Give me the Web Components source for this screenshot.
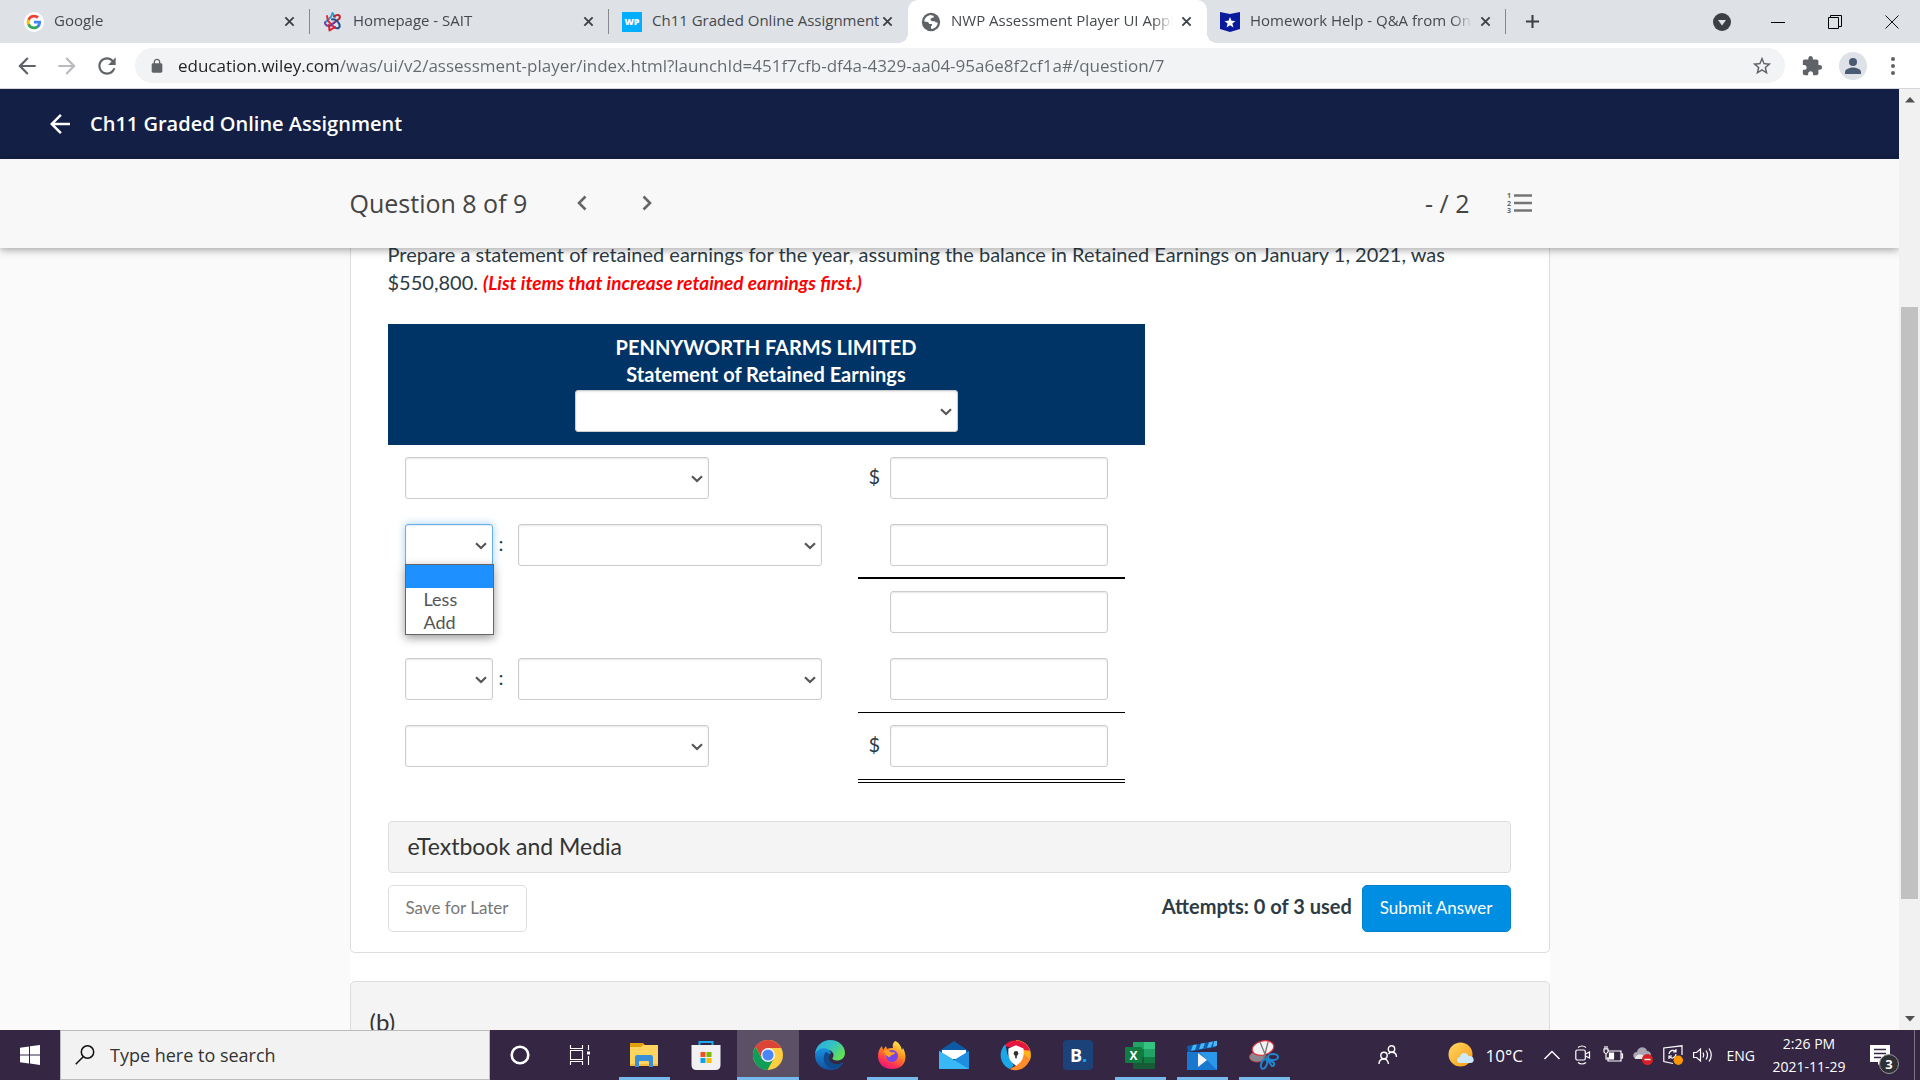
<!DOCTYPE html>
<html lang="en">
<head>
<meta charset="utf-8">
<title>NWP Assessment Player UI Application</title>
<style>
html, body { margin: 0; height: 100%; }
body { overflow: hidden; background: #fafafa; font-family: "Open Sans", "Noto Sans", sans-serif; }
</style>
</head>
<body>
<desktop-screen></desktop-screen>
<script>
const ICONS = {
  google: `<svg viewBox="0 0 24 24"><circle cx="12" cy="12" r="12" fill="#fff"/><g transform="translate(2.4 2.4) scale(.8)"><path fill="#4285f4" d="M22.56 12.25c0-.78-.07-1.53-.2-2.25H12v4.26h5.92c-.26 1.37-1.04 2.53-2.21 3.31v2.77h3.57c2.08-1.92 3.28-4.74 3.28-8.09z"/><path fill="#34a853" d="M12 23c2.97 0 5.46-.98 7.28-2.66l-3.57-2.77c-.98.66-2.23 1.06-3.71 1.06-2.86 0-5.29-1.93-6.16-4.53H2.18v2.84C3.99 20.53 7.7 23 12 23z"/><path fill="#fbbc05" d="M5.84 14.09c-.22-.66-.35-1.36-.35-2.09s.13-1.43.35-2.09V7.07H2.18C1.43 8.55 1 10.22 1 12s.43 3.45 1.18 4.93l2.85-2.22.81-.62z"/><path fill="#ea4335" d="M12 5.38c1.62 0 3.06.56 4.21 1.64l3.15-3.15C17.45 2.09 14.97 1 12 1 7.7 1 3.99 3.47 2.18 7.07l3.66 2.84c.87-2.6 3.3-4.53 6.16-4.53z"/></g></svg>`,
  sait: `<svg viewBox="0 0 20 20" fill="none" stroke-width="2" stroke-linecap="round" stroke-linejoin="round"><path d="M2 10.500l6-5.500 1.500-4L12 5" stroke="#2a9fd8"/><path d="M11 4.500c4-3 7-1 5.500 2L11 11" stroke="#c8202f"/><path d="M9 7.500c3-1 5 1 7 4 2 4-1 6-4 4" stroke="#1d4f91"/><path d="M4 4l1 5 7 7" stroke="#e02b3c"/><path d="M2 10.500c0 3 3 4 6 3l3-3" stroke="#6b3fa0"/><path d="M6 13l.5 5.500L12 15" stroke="#d6202f"/></svg>`,
  wp: `<svg viewBox="0 0 20 20"><path fill="#00aeff" d="M0 0h20v20H0z"/><text x="10" y="13.400" text-anchor="middle" font-family="Open Sans" font-weight="800" font-size="9" fill="#fff">WP</text></svg>`,
  globe: `<svg viewBox="0 0 24 24"><circle cx="12" cy="12" r="11" fill="#5f6368"/><path fill="#fff" d="M11 3.500c-4 1-7 4-7 8l4.500.5 1.500 2.500h2.500c1.500 0 1 2.500-.5 2.500v3c4 .5 8-3 8-7.500-2 .5-3-1-4-1.500-2 0-4 0-4.500-1.500-.4-2 1.500-2.500 3-2.500 1 0 1-1.500.5-2.500z"/></svg>`,
  homework: `<svg viewBox="0 0 20 20"><path fill="#0a1a9c" d="M0 0l10 2 10-2v17l-10 3-10-3z"/><path fill="#fff" d="M10 5l1.500 3.800 4 .2-3.100 2.600 1 3.900L10 13.300l-3.400 2.200 1-3.900L4.500 9l4-.2z"/></svg>`,
  cross: `<svg viewBox="0 0 12 12" fill="none" stroke="currentColor" stroke-width="2"><path d="M1.500 1.500l9 9M10.500 1.500l-9 9"/></svg>`,
  plus: `<svg viewBox="0 0 16 16" fill="none" stroke="currentColor" stroke-width="2.200"><path d="M8 1v14M1 8h14"/></svg>`,
  guest: `<svg viewBox="0 0 18 18"><circle cx="9" cy="9" r="9" fill="#3c4043"/><path fill="#dee1e6" d="M5 7h8l-4 5.500z"/></svg>`,
  minimise: `<svg viewBox="0 0 14 14"><path d="M0 7.500h14" stroke="#000"/></svg>`,
  restore: `<svg viewBox="0 0 14 14" fill="none" stroke="#000"><path d="M.5 2.500h10v11H.5z"/><path d="M2.500 2V.5h11v11H11"/></svg>`,
  shut: `<svg viewBox="0 0 14 14" fill="none" stroke="#111"><path d="M.5.5l13 13M13.500.5l-13 13"/></svg>`,
  back: `<svg viewBox="0 0 24 24"><path fill="currentColor" d="M20 11H7.830l5.590-5.590L12 4l-8 8 8 8 1.410-1.410L7.830 13H20v-2z"/></svg>`,
  forward: `<svg viewBox="0 0 24 24"><path fill="currentColor" d="M4 11h12.170l-5.590-5.590L12 4l8 8-8 8-1.410-1.410L16.170 13H4v-2z"/></svg>`,
  reload: `<svg viewBox="0 0 24 24"><path fill="currentColor" d="M17.650 6.350C16.200 4.900 14.210 4 12 4c-4.420 0-7.990 3.580-7.990 8s3.570 8 7.990 8c3.730 0 6.840-2.550 7.730-6h-2.080c-.82 2.330-3.040 4-5.650 4-3.310 0-6-2.690-6-6s2.690-6 6-6c1.660 0 3.140.69 4.220 1.780L13 11h7V4l-2.350 2.350z"/></svg>`,
  lock: `<svg viewBox="0 0 24 24"><path fill="currentColor" d="M18 8h-1V6c0-2.760-2.240-5-5-5S7 3.240 7 6v2H6c-1.100 0-2 .9-2 2v10c0 1.100.9 2 2 2h12c1.100 0 2-.9 2-2V10c0-1.100-.9-2-2-2zm-3 0H9V6c0-1.660 1.340-3 3-3s3 1.340 3 3v2z"/></svg>`,
  star: `<svg viewBox="0 0 24 24"><path fill="currentColor" d="M22 9.240l-7.190-.62L12 2 9.190 8.630 2 9.240l5.460 4.730L5.820 21 12 17.270 18.180 21l-1.630-7.030L22 9.240zM12 15.400l-3.760 2.270 1-4.280-3.320-2.880 4.380-.38L12 6.100l1.710 4.040 4.380.38-3.320 2.880 1 4.280L12 15.400z"/></svg>`,
  puzzle: `<svg viewBox="0 0 24 24"><path fill="currentColor" d="M20.500 11H19V7c0-1.100-.9-2-2-2h-4V3.500C13 2.120 11.880 1 10.500 1S8 2.120 8 3.500V5H4c-1.100 0-1.990.9-1.990 2v3.800H3.500c1.490 0 2.700 1.210 2.700 2.700s-1.210 2.700-2.700 2.700H2V20c0 1.100.9 2 2 2h3.800v-1.500c0-1.490 1.210-2.700 2.700-2.700 1.490 0 2.700 1.210 2.700 2.700V22H17c1.100 0 2-.9 2-2v-4h1.500c1.380 0 2.500-1.120 2.500-2.500S21.880 11 20.500 11z"/></svg>`,
  avatar: `<svg viewBox="0 0 28 28"><circle cx="14" cy="14" r="14" fill="#dee1e6"/><circle cx="14" cy="10" r="4" fill="#4a5a73"/><path fill="#4a5a73" d="M6 22v-2c0-3 5-4.500 8-4.500s8 1.500 8 4.500v2z"/></svg>`,
  dots: `<svg viewBox="0 0 4 18" fill="#5f6368"><circle cx="2" cy="2" r="2"/><circle cx="2" cy="9" r="2"/><circle cx="2" cy="16" r="2"/></svg>`,
  prev: `<svg viewBox="0 0 10 16" fill="none" stroke="#666" stroke-width="2.600"><path d="M8.500 1.500L2 8l6.500 6.500"/></svg>`,
  next: `<svg viewBox="0 0 10 16" fill="none" stroke="#666" stroke-width="2.600"><path d="M1.500 1.500L8 8l-6.500 6.500"/></svg>`,
  numbered: `<svg viewBox="0 0 25 20"><path d="M7 2.500h18M7 10h18M7 17.500h18" stroke="#757575" stroke-width="2.600"/><g fill="#666" font-family="Open Sans" font-weight="700" font-size="7"><text x="0" y="5">1</text><text x="0" y="12.500">2</text><text x="0" y="20">3</text></g></svg>`,
  caret: `<svg viewBox="0 0 12 8" fill="none" stroke="#555" stroke-width="2.200"><path d="M1 1.300l5 4.700 5-4.700"/></svg>`,
  arrowUp: `<svg viewBox="0 0 10 6"><path fill="#505050" d="M0 5.500L5 0l5 5.500z"/></svg>`,
  arrowDown: `<svg viewBox="0 0 10 6"><path fill="#505050" d="M0 0l5 5.500L10 0z"/></svg>`,
  windows: `<svg viewBox="0 0 20 20" fill="#fff"><path d="M0 2.800l9-1.300v8H0zM10 1.300L20 0v9.500H10zM0 10.500h9v8l-9-1.300zM10 10.500h10V20l-10-1.500z"/></svg>`,
  magnifier: `<svg viewBox="0 0 20 20" fill="none" stroke="#111" stroke-width="1.500"><circle cx="12.500" cy="7" r="6.200"/><path d="M8.200 11.700L.7 19.300"/></svg>`,
  cortana: `<svg viewBox="0 0 20 20"><circle cx="10" cy="10" r="8.300" fill="none" stroke="#fff" stroke-width="2.600"/></svg>`,
  taskview: `<svg viewBox="0 0 20 20" fill="none" stroke="#fff" stroke-width="1.100"><path d="M.5 0v3.500h12V0M.5 5.500h12v9H.5zM.5 20v-3.500h12V20M18.500 0v5M18.500 11v9"/><path d="M17 6.500h3v3h-3z" fill="#fff" stroke="none"/></svg>`,
  explorer: `<svg viewBox="0 0 30 30"><path fill="#e0a10c" d="M1 3h13l2 2v4H1z"/><path fill="#ffd45f" d="M1 7h11l2-2h15v21H1z"/><path fill="#f5bd3d" d="M1 24h28v2H1z"/><path fill="#3a8fd9" d="M6 17q0-2 2-2h14q2 0 2 2v10h-4v-5q0-1-1-1h-8q-1 0-1 1v5H6z"/></svg>`,
  store: `<svg viewBox="0 0 30 30"><path d="M8.500 6V2h13v4" fill="none" stroke="#1aaaf0" stroke-width="2"/><path fill="#f1f1f1" d="M.5 5h29v20q0 5-5 5h-19q-5 0-5-5z"/><path fill="#f25022" d="M9.500 12h5v5h-5z"/><path fill="#7fba00" d="M15.500 12h5v5h-5z"/><path fill="#00a4ef" d="M9.500 18h5v5h-5z"/><path fill="#ffb900" d="M15.500 18h5v5h-5z"/></svg>`,
  chrome: `<svg viewBox="0 0 28 28"><circle cx="14" cy="14" r="14" fill="#ffcd40"/><path fill="#db4437" d="M14 14V7.500h12.400A14 14 0 0 0 2.400 6.200L8.400 17z"/><path fill="#0f9d58" d="M14 14l-5.700 3.200L2.400 6.200A14 14 0 0 0 13.500 28l6-10.800z"/><circle cx="14" cy="14" r="6.500" fill="#f4f4f4"/><circle cx="14" cy="14" r="5.200" fill="#4a86f5"/></svg>`,
  edge: `<svg viewBox="0 0 30 30"><defs><linearGradient id="a" x1="0" y1="0" x2="1" y2=".6"><stop stop-color="#2aa9e8"/><stop offset=".55" stop-color="#35c3c0"/><stop offset="1" stop-color="#62e052"/></linearGradient><linearGradient id="b" x1="0" y1="0" x2="0" y2="1"><stop stop-color="#1a8fe0"/><stop offset="1" stop-color="#0f52a0"/></linearGradient></defs><path fill="url(#a)" d="M0 14C1 5 8 0 15 0c9 0 15 6 15 13 0 5-4 7.500-8 7.500-3 0-5-1-4.500-2.500 2-2 1.500-7-4-8C8 9 3 11 0 14z"/><path fill="url(#b)" d="M0 15c1-5 6-7.500 11-6.500 3 .6 5 3 5 5-4 1-4 10 4 11 3 .3 6-.5 8-2-2 5-7 7.500-12 7.500C7 30 0 24 0 15z"/><path fill="#114a8b" d="M11 12c-4 4-3 13 5 17 6 .500 10-3 12-6.500-9 4.500-16-1-14-9z"/></svg>`,
  firefox: `<svg viewBox="0 0 28 30"><defs><linearGradient id="f" x1=".8" y1="0" x2=".3" y2="1"><stop stop-color="#fff44f"/><stop offset=".45" stop-color="#ff8a1f"/><stop offset=".8" stop-color="#ff2f56"/><stop offset="1" stop-color="#e8167e"/></linearGradient></defs><path fill="url(#f)" d="M17 1c5 2 6 6 7 9l1-2c5 9 3 21-11 21C5 29 0 23 0 16c0-4 1-7 4-10l1 4 3-4 1 3c2-1 4-1 6-1-1-3 0-5 2-7z"/><circle cx="14" cy="16" r="6" fill="#7a45e8"/><path fill="#ffa422" d="M6 11c3-1 5 0 7 1 2 .5 4 0 4 1 0 2-4 1-5 4-2 0-5-2-6-6z"/></svg>`,
  mail: `<svg viewBox="0 0 30 30"><path fill="#0c59a4" d="M0 11L15 1l15 10v4H0z"/><path fill="#fff" d="M3 10h24v9H3z"/><path fill="#1e8fe0" d="M0 11l15 9 15-9v18H0z"/><path fill="#39b8f5" d="M0 11l30 18H0z"/></svg>`,
  shield: `<svg viewBox="0 0 28 28"><path fill="#ffb21c" d="M14 0a14 14 0 0 1 13 19L14 28z"/><path fill="#e8173f" d="M3 5.500A14 14 0 0 1 27 10l-8-1z"/><path fill="#19a7e8" d="M4 4a14 14 0 0 0 4 23l4-3-6-11z"/><path fill="#ff8b2b" d="M8 27a14 14 0 0 0 19-9l-6-5-7 11z"/><path fill="#fff" d="M14 5l7 3c1 9-2 13-7 16-5-3-8-7-7-16z"/><circle cx="14" cy="12.500" r="2.200" fill="#333"/><path stroke="#333" stroke-width="1.600" d="M14 13v4"/></svg>`,
  booking: `<svg viewBox="0 0 30 30"><rect width="30" height="30" rx="4" fill="#1c427a"/><text x="7" y="21.500" font-family="Open Sans" font-weight="700" font-size="18" fill="#fff">B<tspan fill="#1da5f0">.</tspan></text></svg>`,
  excel: `<svg viewBox="0 0 30 30"><path fill="#21a366" d="M8 2h22v7H8z"/><path fill="#33c481" d="M19 2h11v7H19z"/><path fill="#107c41" d="M8 9h22v8H8z"/><path fill="#21a366" d="M19 9h11v8H19z"/><path fill="#185c37" d="M8 17h22v12H8z"/><path fill="#107c41" d="M19 17h11v6H19z"/><rect y="7" width="17" height="16" rx="1" fill="#107c41"/><text x="8.500" y="19.500" text-anchor="middle" font-family="Open Sans" font-weight="700" font-size="12" fill="#fff">X</text></svg>`,
  movies: `<svg viewBox="0 0 30 30"><path fill="#0d5fae" d="M0 6L29 1v6L1 12z"/><path fill="#4cb5f5" d="M6 5l4-.6L8 10l-4 .7zM14 3.600l4-.7-2 5.600-4 .7zM22 2.300l4-.7-2 5.600-4 .7zM27 1.300l3-.5v5l-4 1z"/><path fill="#1878d0" d="M0 12h30v18H0z"/><path fill="#2a97e8" d="M12 12h18v18z"/><path fill="#f4f4f4" d="M11 13l9 7-9 7z"/></svg>`,
  snip: `<svg viewBox="0 0 30 30" fill="none"><ellipse cx="8" cy="17" rx="7.500" ry="5" fill="#8a8792" stroke="#d7404a" stroke-width=".8"/><ellipse cx="14" cy="8" rx="11" ry="7" fill="#f2f2f4" stroke="#e0303a" stroke-width="1.200" transform="rotate(-14 14 8)"/><path d="M11 2l7 17M19 2l-4 16" stroke="#777" stroke-width="1.300"/><g stroke="#1f86cf" stroke-width="2"><ellipse cx="15" cy="24" rx="2.800" ry="5" transform="rotate(20 15 24)"/><ellipse cx="24" cy="17" rx="5" ry="3"/><path d="M17 18l6 8q3 0 2-3l-8-5"/></g></svg>`,
  people: `<svg viewBox="0 0 20 20" fill="none" stroke="#fff" stroke-width="1.400"><circle cx="13.500" cy="4" r="3.200"/><circle cx="6" cy="10.500" r="3.200"/><path d="M1 19c0-3 2-5 5-5s4 2 4.500 5M10.500 9c1-1.500 2-1.700 3-1.700 3 0 5 2 5 4.700"/></svg>`,
  weather: `<svg viewBox="0 0 26 26"><defs><linearGradient id="w" x1="0" y1="0" x2="1" y2="1"><stop stop-color="#ffd864"/><stop offset="1" stop-color="#f79a12"/></linearGradient></defs><circle cx="12.500" cy="12.500" r="12" fill="url(#w)"/><path fill="#cfe8fa" d="M12 21c-4 0-4-6 0-6 0-5 8-5 8.500-1 6-1 7 7 2 7z"/></svg>`,
  chevronUp: `<svg viewBox="0 0 16 10" fill="none" stroke="#fff" stroke-width="1.400"><path d="M.5 9L8 1.500 15.500 9"/></svg>`,
  camera: `<svg viewBox="0 0 16 20" fill="none" stroke="#fff" stroke-width="1.200"><rect x=".8" y="5" width="9.500" height="10" rx="1.500"/><path d="M10.500 9l4-2v6l-4-2M3 2.500q4-3 8 0M3 17.500q4 3 8 0"/></svg>`,
  battery: `<svg viewBox="0 0 20 18" fill="none" stroke="#fff" stroke-width="1.200"><path d="M5 5h13v10H5v-4M18.500 8h1v4h-1"/><path d="M1 3h4v3q-2 3-4 0zM2 0v3M4 0v3M3 7v6h3"/><path d="M6.500 7h4v6h-4z" fill="#fff"/></svg>`,
  cloud: `<svg viewBox="0 0 20 20"><path fill="#a9a5b3" d="M4 14c-5 0-5-7 0-7 1-6 9-6 10-1 5 0 6 8 0 8z"/><path fill="#e8e8ec" d="M2 14c0-4 5-6 9-3l3 3z"/><circle cx="14.500" cy="14.500" r="5.500" fill="#d92027"/><path stroke="#fff" stroke-width="1.400" d="M11.500 14.500h6"/></svg>`,
  update: `<svg viewBox="0 0 20 20" fill="none" stroke="#fff" stroke-width="1.200"><path d="M10 18.500L.8 16.500V3L19 .8V10"/><path d="M6 9c1-5 6-4 7-2M13 4v3h-3M13 9c-1 5-5 5-7 2M6 14v-3h3"/><circle cx="15.300" cy="15.300" r="4.700" fill="#ff9800" stroke="none"/></svg>`,
  volume: `<svg viewBox="0 0 20 16" fill="none" stroke="#fff" stroke-width="1.200"><path d="M.6 5.500h3L7.500 2v12l-3.900-3.500h-3zM10 5.500q1.500 2.500 0 5M13 3.500q3 4.500 0 9M16 1.500q4.500 6.500 0 13"/></svg>`,
  note: `<svg viewBox="0 0 20 20"><path fill="#fff" d="M0 0h20v17h-9l-3 3v-3H0z"/><path stroke="#352644" stroke-width="1.300" d="M4 4.500h12M4 8.500h12M4 12.500h7"/></svg>`
};

function component(name, html, setup) {
  const template = document.createElement("template");
  template.innerHTML = html;
  customElements.define(name, class extends HTMLElement {
    constructor() {
      super();
      this.attachShadow({ mode: "open" }).append(template.content.cloneNode(true));
    }
    connectedCallback() { if (setup) setup(this, this.shadowRoot); }
  });
}

component("ui-icon", `
<style>:host { display: inline-flex; flex: none; width: 20px; height: 20px; } svg { display: block; width: 100%; height: 100%; overflow: visible; }</style>`,
(host, root) => {
  if (!root.querySelector("svg")) root.innerHTML += ICONS[host.getAttribute("name")];
});

component("browser-tab", `
<style>
:host { display: flex; flex: 0 1 299px; min-width: 0; align-items: center; height: 43px; box-sizing: border-box; padding: 0 13px; position: relative; color: #45494d; font-size: 15px; }
:host(:not([active]):not([last-before]))::after { content: ""; position: absolute; right: 0; top: 9px; width: 1px; height: 25px; background: #85888c; }
:host([active]) { background: #fff; border-radius: 10px 10px 0 0; }
:host([active])::before, :host([active])::after { content: ""; position: absolute; bottom: 0; width: 10px; height: 10px; }
:host([active])::before { left: -10px; background: radial-gradient(circle at 0 0, #dee1e6 10px, #fff 10px); }
:host([active])::after { right: -10px; background: radial-gradient(circle at 100% 0, #dee1e6 10px, #fff 10px); }
a { flex: 1; min-width: 0; margin: 0 1px 3px 10px; overflow: hidden; white-space: nowrap; color: inherit; text-decoration: none; line-height: 24px; -webkit-mask-image: linear-gradient(90deg, #000 202px, transparent 222px); }
:host([last-before]) a { -webkit-mask-image: none; }
button { border: 0; background: none; padding: 2px; color: #3c4043; display: flex; }
button ui-icon { width: 11px; height: 11px; }
</style>
<slot name="icon"></slot><a href="#"><slot></slot></a><button aria-label="Close tab"><ui-icon name="cross"></ui-icon></button>`);

component("tab-strip", `
<style>
:host { display: flex; background: #dee1e6; padding-left: 11px; height: 43px; }
nav { display: flex; flex: 1; min-width: 0; align-items: center; }
button { border: 0; background: none; padding: 0; display: flex; align-items: center; justify-content: center; color: #3c4043; }
.add { width: 52px; } .add ui-icon { width: 15px; height: 15px; }
.guest { width: 54px; }
.guest ui-icon { width: 18px; height: 18px; }
.window { display: flex; align-items: center; }
.window .ctl { width: 57px; height: 38px; }
.ctl ui-icon { width: 14px; height: 14px; }
</style>
<nav>
<browser-tab><ui-icon slot="icon" name="google"></ui-icon>Google</browser-tab>
<browser-tab><ui-icon slot="icon" name="sait"></ui-icon>Homepage - SAIT</browser-tab>
<browser-tab last-before><ui-icon slot="icon" name="wp"></ui-icon>Ch11 Graded Online Assignment</browser-tab>
<browser-tab active><ui-icon slot="icon" name="globe"></ui-icon>NWP Assessment Player UI Application</browser-tab>
<browser-tab><ui-icon slot="icon" name="homework"></ui-icon>Homework Help - Q&amp;A from Online</browser-tab>
<button class="add" aria-label="New tab"><ui-icon name="plus"></ui-icon></button>
</nav>
<div class="window">
<button class="guest" aria-label="Search tabs"><ui-icon name="guest"></ui-icon></button>
<button class="ctl" aria-label="Minimise"><ui-icon name="minimise"></ui-icon></button>
<button class="ctl" aria-label="Restore"><ui-icon name="restore"></ui-icon></button>
<button class="ctl" aria-label="Close"><ui-icon name="shut"></ui-icon></button>
</div>`);

component("address-bar", `
<style>
:host { display: flex; align-items: center; height: 45px; background: #fff; border-bottom: 1px solid #d5d7da; padding: 0 25px 0 14px; }
button { border: 0; background: none; padding: 0; display: flex; color: #5f6368; }
.nav { display: flex; gap: 14px; } .nav ui-icon { width: 26px; height: 26px; }
.off { color: #b8babd; }
.pill { flex: 1; display: flex; align-items: center; height: 35px; margin: 0 16px 0 15px; border-radius: 18px; background: #f1f3f4; padding: 0 12px 0 14px; color: #5f6368; }
.pill > ui-icon { width: 16px; height: 16px; }
input { flex: 1; min-width: 0; border: 0; padding: 0; margin: 0 12px 0 13px; outline: 0; font: 17px/24px "Open Sans", sans-serif; color: transparent; background: linear-gradient(90deg, #202124 161px, #64686d 161px); -webkit-background-clip: text; background-clip: text; }
.tools { display: flex; align-items: center; gap: 16px; }
.puzzle { width: 22px; height: 22px; } .face { width: 28px; height: 28px; }
.more { margin-left: 8px; width: 4px; height: 18px; }
.star { width: 22px; height: 22px; }
</style>
<div class="nav"><button aria-label="Back"><ui-icon name="back"></ui-icon></button><button class="off" aria-label="Forward"><ui-icon name="forward"></ui-icon></button><button aria-label="Reload"><ui-icon name="reload"></ui-icon></button></div>
<div class="pill"><ui-icon name="lock"></ui-icon><input aria-label="Address" value="education.wiley.com/was/ui/v2/assessment-player/index.html?launchId=451f7cfb-df4a-4329-aa04-95a6e8f2cf1a#/question/7"><button aria-label="Bookmark"><ui-icon class="star" name="star"></ui-icon></button></div>
<div class="tools"><button aria-label="Extensions"><ui-icon class="puzzle" name="puzzle"></ui-icon></button><button aria-label="Profile"><ui-icon class="face" name="avatar"></ui-icon></button><button aria-label="Menu"><ui-icon class="more" name="dots"></ui-icon></button></div>`);

component("assignment-header", `
<style>
:host { display: flex; align-items: center; gap: 15px; height: 70px; padding: 0 45px; background: #131f44; color: #fff; }
button { border: 0; background: none; padding: 0; display: flex; color: #fff; } ui-icon { width: 30px; height: 30px; }
h1 { margin: 0; font: 600 20px/28px "Open Sans", sans-serif; }
</style>
<button aria-label="Back to course"><ui-icon name="back"></ui-icon></button><h1><slot></slot></h1>`);

component("question-bar", `
<style>
:host { display: block; position: relative; z-index: 2; background: #f8f8f8; box-shadow: 0 2px 8px rgba(0,0,0,.35); color: #444; }
.row { width: min(1200px, 100%); margin: 0 auto; height: 89px; display: flex; align-items: center; box-sizing: border-box; padding: 0 18px 2px 0; font-size: 25px; line-height: 34px; }
h2 { margin: 0; font: inherit; }
button { border: 0; background: none; padding: 0; display: flex; }
.arrows { display: flex; gap: 55px; margin-left: 50px; }
.arrows ui-icon { width: 10px; height: 16px; }
.score { margin-left: auto; margin-right: 37px; }
.list { width: 25px; height: 20px; }
</style>
<div class="row"><h2><slot></slot></h2><div class="arrows"><button aria-label="Previous question"><ui-icon name="prev"></ui-icon></button><button aria-label="Next question"><ui-icon name="next"></ui-icon></button></div>
<span class="score">- / 2</span><button aria-label="Question list"><ui-icon class="list" name="numbered"></ui-icon></button></div>`);

component("drop-list", `
<style>
:host { display: inline-block; position: relative; width: 304px; height: 42px; vertical-align: top; }
:host([small]) { width: 88px; }
:host([wide]) { width: 383px; }
select { appearance: none; display: block; width: 100%; height: 100%; margin: 0; padding: 0 24px 0 12px; border: 1px solid #ccc; border-radius: 3px; background: #fff; box-shadow: inset 0 1px 2px rgba(0,0,0,.1); font: 18px "Lato", sans-serif; color: #555; outline: 0; }
:host([open]) select { border-color: #66afe9; box-shadow: inset 0 1px 1px rgba(0,0,0,.08), 0 0 8px rgba(102,175,233,.6); }
ui-icon { position: absolute; right: 6px; top: 18px; width: 12px; height: 8px; pointer-events: none; }
ul { display: none; }
:host([open]) ul { display: block; position: absolute; z-index: 1; top: 40px; left: 0; width: 89px; box-sizing: border-box; margin: 0; padding: 0; list-style: none; border: 1px solid #666; background: #fff; box-shadow: 0 3px 9px rgba(0,0,0,.4); font: 18px/23px "Lato", sans-serif; color: #555; }
li { height: 23px; padding-left: 18px; }
li:first-child { background: #1e90ff; }
</style>
<select><option></option></select><ui-icon name="caret"></ui-icon>
<ul role="listbox"><li role="option"></li></ul>`,
(host, root) => {
  const select = root.querySelector("select"), list = root.querySelector("ul");
  select.setAttribute("aria-label", host.getAttribute("label"));
  for (const text of (host.getAttribute("options") || "").split(",").filter(Boolean)) {
    select.add(new Option(text));
    if (host.hasAttribute("open")) {
      const item = document.createElement("li");
      item.setAttribute("role", "option");
      item.textContent = text;
      list.append(item);
    }
  }
});

component("amount-field", `
<style>
:host { display: block; padding: 12px 17px 13px 11px; height: 42px; border-bottom: 0 solid #000; color: #2d3b45; font: 20px/38px "Lato", sans-serif; }
:host([rule="single"]) { border-bottom-width: 1px; padding-bottom: 12px; }
:host([rule="heavy"]) { border-bottom-width: 2px; padding-bottom: 11px; }
:host([rule="double"]) { border-bottom: 4px double #000; padding-bottom: 12px; }
label { display: flex; }
span { width: 21px; }
input { flex: 1; min-width: 0; box-sizing: border-box; height: 42px; border: 1px solid #ccc; border-radius: 3px; padding: 0 12px; background: #fff; box-shadow: inset 0 1px 2px rgba(0,0,0,.1); font: inherit; color: #555; }
</style>
<label><span><slot></slot></span><input type="text"></label>`,
(host, root) => root.querySelector("input").setAttribute("aria-label", host.getAttribute("label")));

component("earnings-statement", `
<style>
:host { display: block; width: min(757px, 100%); }
table { width: 100%; border-spacing: 0; table-layout: fixed; color: #2d3b45; }
col.item { width: 470px; } col.end { width: 19px; }
th { background: #003366; color: #fff; padding: 10px 0 13px; font: 700 20px/27px "Lato", sans-serif; }
th div { margin-bottom: 2px; }
td { padding: 0; vertical-align: top; }
.pick { display: flex; padding: 12px 0 0 17px; font: 20px/38px "Lato", sans-serif; }
.pick b { width: 25px; box-sizing: border-box; padding-left: 6px; font-weight: 400; }
</style>
<table>
<colgroup><col class="item"><col><col class="end"></colgroup>
<thead><tr><th colspan="3"><div>PENNYWORTH FARMS LIMITED<br>Statement of Retained Earnings</div><drop-list wide label="Statement period"></drop-list></th></tr></thead>
<tbody>
<tr><td><div class="pick"><drop-list label="Opening item"></drop-list></div></td><td><amount-field label="Opening amount">$</amount-field></td><td></td></tr>
<tr><td><div class="pick"><drop-list small open label="Less or add" options="Less,Add"></drop-list><b>:</b><drop-list label="First change"></drop-list></div></td><td><amount-field rule="heavy" label="First change amount"></amount-field></td><td></td></tr>
<tr><td></td><td><amount-field label="Subtotal"></amount-field></td><td></td></tr>
<tr><td><div class="pick"><drop-list small label="Less or add" options="Less,Add"></drop-list><b>:</b><drop-list label="Second change"></drop-list></div></td><td><amount-field rule="single" label="Second change amount"></amount-field></td><td></td></tr>
<tr><td><div class="pick"><drop-list label="Closing item"></drop-list></div></td><td><amount-field rule="double" label="Closing amount">$</amount-field></td><td></td></tr>
</tbody></table>`);

component("question-part", `
<style>
:host { display: block; box-sizing: border-box; border: 1px solid #ddd; border-top: 0; border-radius: 0 0 5px 5px; background: #fff; padding: 0 38px 20px 37px; color: #2d3b45; font: 20px/28px "Lato", sans-serif; }
p { margin: 0 0 28px; }
em { color: #f00; font-weight: 700; font-size: 19px; line-height: 24px; }
.media { display: block; width: 100%; height: 52px; margin: 38px 0 12px; border: 1px solid #ddd; border-radius: 4px; background: #f4f4f4; padding: 0 19px 2px; text-align: left; font: 23px/28px "Lato", sans-serif; color: #333; }
.actions { display: flex; align-items: center; }
.actions button { height: 47px; border: 1px solid #ddd; border-radius: 5px; background: #fff; padding: 0 17px 2px; font: 17px/24px "Lato", sans-serif; color: #777; }
.actions strong { margin-left: auto; margin-right: 10px; padding-bottom: 6px; font-weight: 700; }
.actions .submit { background: #008ee3; border-color: #0080cd; color: #fff; }
</style>
<p>Prepare a statement of retained earnings for the year, assuming the balance in Retained Earnings on January 1, 2021, was $550,800. <em>(List items that increase retained earnings first.)</em></p>
<earnings-statement></earnings-statement>
<button class="media">eTextbook and Media</button>
<div class="actions"><button>Save for Later</button><strong>Attempts: 0 of 3 used</strong><button class="submit">Submit Answer</button></div>`);

component("next-part", `
<style>
:host { display: block; box-sizing: border-box; margin-top: 28px; border: 1px solid #ddd; border-radius: 5px; background: #f4f4f4; padding: 24px 19px 40px; }
h3 { margin: 0; font: 24px/32px "Lato", sans-serif; color: #333; }
</style><h3><slot></slot></h3>`);

component("scroll-rail", `
<style>
:host { display: flex; flex-direction: column; align-items: center; flex: none; width: 21px; box-sizing: border-box; background: #f1f1f1; padding: 8px 2px; }
ui-icon { width: 10px; height: 6px; }
.track { flex: 1; align-self: stretch; display: flex; flex-direction: column; margin: 3px 0; }
.track::before { content: ""; flex: 201; } .thumb { flex: 591; background: #c1c1c1; } .track::after { content: ""; flex: 114; }
</style><ui-icon name="arrowUp"></ui-icon><div class="track"><div class="thumb"></div></div><ui-icon name="arrowDown"></ui-icon>`);

component("task-button", `
<style>
:host { display: block; flex: none; width: 62px; height: 50px; }
button { width: 100%; height: 100%; padding: 0; border: 0; background: none; display: flex; align-items: center; justify-content: center; position: relative; }
:host([running]) button::after { content: ""; position: absolute; bottom: 0; left: 6px; right: 5px; height: 3px; background: #76b9ed; }
:host([current]) button { background: #5c5067; }
:host([current]) button::after { left: 0; right: 0; }
ui-icon { width: 30px; height: 30px; }
:host([plain]) ui-icon { width: 20px; height: 20px; }
:host([plain]) { width: 60px; }
</style><button><ui-icon></ui-icon></button>`,
(host, root) => {
  const old = root.querySelector("ui-icon"), icon = document.createElement("ui-icon");
  icon.setAttribute("name", host.getAttribute("icon"));
  old.replaceWith(icon);
  root.querySelector("button").setAttribute("aria-label", host.getAttribute("icon"));
});

component("task-bar", `
<style>
:host { display: flex; position: relative; z-index: 3; height: 50px; background: #352644; color: #fff; font: 15px/23px "Open Sans", sans-serif; }
.search { flex: 0 1 430px; box-sizing: border-box; display: flex; align-items: center; gap: 15px; padding: 0 14px; background: #f2f2f2; border: 1px solid #bcbcbc; }
.search input { flex: 1; min-width: 0; border: 0; padding: 0; background: none; font: 18px/24px "Open Sans", sans-serif; outline: 0; }
.search input::placeholder { color: #333; opacity: 1; }
.apps { display: flex; margin-left: 3px; }
.tray { margin-left: auto; display: flex; align-items: center; padding-right: 30px; }
.people { margin-right: 50px; }
.weather { width: 26px; height: 26px; margin-right: 12px; }
.temp { font-size: 17px; width: 58px; white-space: nowrap; }
.small { display: flex; align-items: center; gap: 10px; }
.up { width: 16px; height: 10px; margin-right: 3px; }
.lang { margin-left: 14px; font-size: 14px; }
.clock { margin-left: 14px; width: 80px; text-align: center; font-size: 14px; }
.notes { position: relative; display: flex; margin-left: 21px; padding: 0; border: 0; background: none; }
.badge { position: absolute; left: 9px; top: 9px; width: 18px; height: 18px; border-radius: 50%; border: 1px solid #999; background: #2e3036; color: #fff; font: 700 13px/18px "Open Sans", sans-serif; text-align: center; }
.peek { position: absolute; right: 5px; top: 0; bottom: 0; width: 1px; background: #7b7185; }
</style>
<task-button plain icon="windows"></task-button>
<label class="search"><ui-icon name="magnifier"></ui-icon><input type="text" aria-label="Search" placeholder="Type here to search"></label>
<task-button plain icon="cortana"></task-button><task-button plain icon="taskview"></task-button>
<div class="apps"><task-button running icon="explorer"></task-button><task-button icon="store"></task-button><task-button running current icon="chrome"></task-button><task-button icon="edge"></task-button><task-button running icon="firefox"></task-button><task-button icon="mail"></task-button><task-button icon="shield"></task-button><task-button icon="booking"></task-button><task-button running icon="excel"></task-button><task-button running icon="movies"></task-button><task-button running icon="snip"></task-button></div>
<div class="tray"><ui-icon class="people" name="people"></ui-icon><ui-icon class="weather" name="weather"></ui-icon><span class="temp">10°C</span>
<div class="small"><ui-icon class="up" name="chevronUp"></ui-icon><ui-icon name="camera"></ui-icon><ui-icon name="battery"></ui-icon><ui-icon name="cloud"></ui-icon><ui-icon name="update"></ui-icon><ui-icon name="volume"></ui-icon></div>
<span class="lang">ENG</span><div class="clock">2:26 PM<br>2021-11-29</div>
<button class="notes" aria-label="Notifications"><ui-icon name="note"></ui-icon><span class="badge">3</span></button></div><div class="peek"></div>`);

component("desktop-screen", `
<style>
:host { display: flex; flex-direction: column; height: 100vh; }
tab-strip, address-bar, task-bar { flex: none; }
.view { flex: 1; min-height: 0; display: flex; }
.page { flex: 1; min-width: 0; display: flex; flex-direction: column; overflow: hidden; background: #fafafa; }
.page > assignment-header, .page > question-bar { flex: none; }
/* The page is scrolled part way: the first line runs under the question bar. */
main { flex: none; width: min(1200px, 100%); margin: -8px auto 0; background: #fff; }
</style>
<tab-strip></tab-strip><address-bar></address-bar>
<div class="view"><div class="page"><assignment-header>Ch11 Graded Online Assignment</assignment-header><question-bar>Question 8 of 9</question-bar>
<main><question-part></question-part><next-part>(b)</next-part></main></div><scroll-rail></scroll-rail></div>
<task-bar></task-bar>`);
</script>
</body>
</html>
